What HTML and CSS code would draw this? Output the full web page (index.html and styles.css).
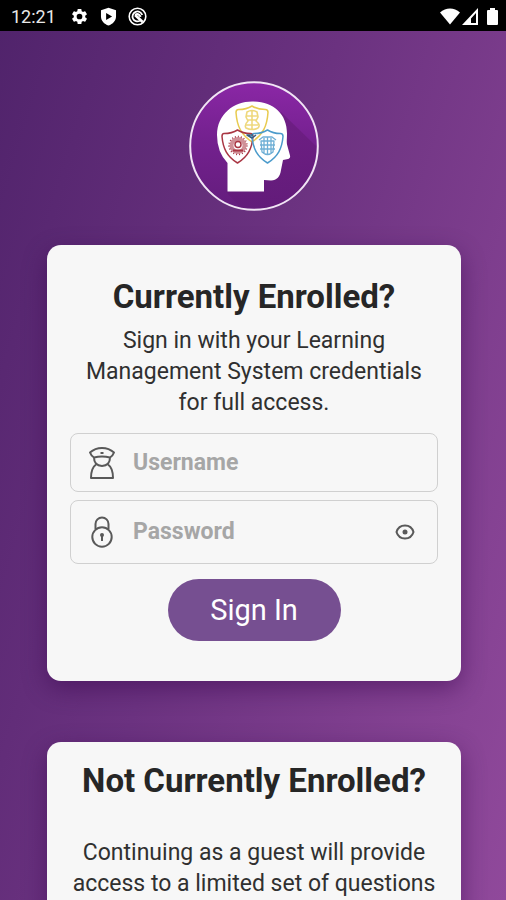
FILE: index.html
```html
<!DOCTYPE html>
<html lang="en">
<head>
<meta charset="utf-8">
<meta name="viewport" content="width=device-width, initial-scale=1">
<title>Sign In</title>
<link rel="stylesheet" href="styles.css">
</head>
<body>
<div class="app">
  <header class="status">
    <div class="status-left">
      <span class="clock">12:21</span>
      <svg class="status-icon" viewBox="0 0 24 24" fill="#fff"><path d="M19.14 12.94c.04-.3.06-.61.06-.94s-.02-.64-.07-.94l2.03-1.58a.5.5 0 0 0 .12-.61l-1.92-3.32a.5.5 0 0 0-.59-.22l-2.39.96a7 7 0 0 0-1.62-.94l-.36-2.54a.5.5 0 0 0-.48-.41h-3.84a.5.5 0 0 0-.47.41l-.36 2.54c-.59.24-1.13.57-1.62.94l-2.39-.96a.5.5 0 0 0-.59.22L2.74 8.87a.5.5 0 0 0 .12.61l2.03 1.58a6 6 0 0 0 0 1.88l-2.03 1.58a.5.5 0 0 0-.12.61l1.92 3.32c.12.22.37.29.59.22l2.39-.96c.5.38 1.03.7 1.62.94l.36 2.54c.05.24.24.41.48.41h3.84c.24 0 .44-.17.47-.41l.36-2.54a7 7 0 0 0 1.62-.94l2.39.96c.22.08.47 0 .59-.22l1.92-3.32a.5.5 0 0 0-.12-.61zM12 15.6a3.6 3.6 0 1 1 0-7.2 3.6 3.6 0 0 1 0 7.200z"/></svg>
      <svg class="status-icon" viewBox="0 0 24 24" fill="#fff" fill-rule="evenodd"><path d="M12 1 21.500 4v8c0 5.500-4 9.500-9.500 11.500C6.500 21.500 2.500 17.500 2.500 12V4zM9 7.500v9l7.500-4.500z"/></svg>
      <svg class="status-icon" viewBox="0 0 24 24" fill="none" stroke="#fff"><circle cx="12" cy="12" r="10.500" stroke-width="2"/><path d="M15 17.500a6.300 6.300 0 1 1 3-7.500" stroke-width="2.200"/><path d="m9 10 9.500 9" stroke-width="3.500"/><path d="M9 10q4-3 7 2.500" stroke-width="2.500"/></svg>
    </div>
    <div class="status-right">
      <svg class="wifi" viewBox="0 0 20 17" fill="#fff"><path d="M0 4.500C6-.8 14-.8 20 4.500L10 16.500z"/></svg>
      <svg class="signal" viewBox="0 0 16 17" fill="#fff" fill-rule="evenodd"><path d="M16 0v17H0zM14 5v10H9v-4.500z"/></svg>
      <svg class="battery" viewBox="0 0 11 17" fill="#fff"><path d="M3 0h5v2h2q1 0 1 1v13q0 1-1 1H1q-1 0-1-1V3q0-1 1-1h2z"/></svg>
    </div>
  </header>
  <main class="page">
    <svg class="logo" viewBox="0 0 130 130" role="img" aria-label="Logo">
      <defs>
        <linearGradient id="disc" x1=".5" y1="0" x2=".45" y2="1"><stop offset="0" stop-color="#8b27a6"/><stop offset=".45" stop-color="#74218f"/><stop offset="1" stop-color="#641d7d"/></linearGradient>
        <linearGradient id="shade" x1=".5" y1="0" x2=".5" y2="1"><stop offset="0" stop-color="#6b1d80"/><stop offset="1" stop-color="#611b78"/></linearGradient>
        <clipPath id="round"><circle cx="65" cy="65" r="63"/></clipPath>
      </defs>
      <circle cx="65" cy="65" r="64" fill="url(#disc)"/>
      <g clip-path="url(#round)"><path d="M92 31 130 68v70H62L37 111z" fill="url(#shade)" opacity=".8"/></g>
      <circle cx="65" cy="65" r="63.800" fill="none" stroke="#f1e5f5" stroke-width="2"/>
      <path d="M38.500 110.500V82Q28 71 28 54C28 33 45 20.500 63 20.500c21 0 35 12 35 32 0 5-.5 8 0 11l3 11c.5 2-.5 3-2 3.500l-5 1-2 10c-1 7-4 10-10 10.500l-7-.5v11.500z" fill="#fff"/>
      <g fill="none" stroke-width="1.500" stroke-linejoin="round">
        <g stroke="#e8cb50">
          <path d="M49.500 28.500q8 0 13.500-3.500 5.500 3.500 13.500 3.500 2.500 0 2.500 3c-1 14-5 22-16 29.500-11-7.500-15-15.500-16-29.500q0-3 2.500-3z"/>
          <g stroke-width="1.600" opacity=".75"><path d="M58 31q5-3 10 0l1 5-2 4q5 4 2 7-6 3-12 0-2-3 2-7l-2-4zM57 35h11M58 39h9M57 44h12M63 30v18"/></g>
        </g>
        <g stroke="#a93643">
          <path d="M35 52.500q8 0 13.500-3.500 5.500 3.500 13 3.500 2.500 0 2.500 3c-1 12-5 20-15.500 26.500C38 75.500 34 67.500 33 55.500q0-3 2-3z"/>
          <circle cx="49" cy="64.500" r="6.500" stroke-width="4" opacity=".55"/>
          <circle cx="49" cy="64.500" r="9" stroke-dasharray="1 2"/>
          <circle cx="49" cy="63.500" r="3"/><path d="M44 69.500h10" stroke-width="2"/>
        </g>
        <g stroke="#4b9bcb">
          <path d="M65 52.500q8 0 13.500-3.500 5.500 3.500 13 3.500 2.500 0 2.500 3c-1 12-5 20-15.500 26.500C68 75.500 64 67.500 63 55.500q0-3 2-3z"/>
          <g stroke-width="1.300" opacity=".8"><path d="M72 60h13l-1 11q-5.500 5-11 0zM70 59l4-3h9l4 3M75 57v16M78.500 56v18M82 57v16M71 64h15M71 68h15"/></g>
        </g>
        <path d="M64 54h-6l5 3 4-3" stroke="#365d80"/>
      </g>
    </svg>

    <section class="card card-login">
      <h1 class="title">Currently Enrolled?</h1>
      <p class="copy">Sign in with your Learning Management System credentials for full access.</p>
      <form class="form">
        <label class="field" for="username">
          <svg class="field-icon" viewBox="0 0 28 34" fill="none" stroke="#595959" stroke-width="2" stroke-linejoin="round"><path d="M2 6.500Q7 2 14 2t12 4.500q-1 3-4 5-8-2-16 0-3-2-4-5zM6 11.500q0 8 8 8.500 8-.5 8-8.500M8 18.500Q3 22 3 32h22q0-10-5-13.500M12.500 7h3"/></svg>
          <input class="input" id="username" type="text" placeholder="Username" aria-label="Username">
        </label>
        <div class="field field-password">
          <label class="icon-label" for="password"><svg class="field-icon" viewBox="0 0 28 34" fill="none" stroke="#595959" stroke-width="2"><path d="M7.500 14V9a6.500 6.500 0 0 1 13 0v5"/><circle cx="14" cy="22" r="9.700"/><path d="M14 20v6" stroke-width="2"/><circle cx="14" cy="20" r="2" fill="#595959" stroke="none"/></svg></label>
          <input class="input" id="password" type="password" placeholder="Password" aria-label="Password">
          <button class="reveal" type="button" aria-label="Show password"><svg class="eye" viewBox="0 0 20 16" fill="none" stroke="#595959" stroke-width="2"><path d="M1.500 8C3 3 6.500 1.500 10 1.500S17 3 18.500 8C17 13 13.500 14.500 10 14.500S3 13 1.500 8z"/><circle cx="10" cy="8" r="2.500" fill="#595959" stroke="none"/></svg></button>
        </div>
        <button class="submit" type="submit">Sign In</button>
      </form>
    </section>

    <section class="card card-guest">
      <h2 class="title">Not Currently Enrolled?</h2>
      <p class="copy">Continuing as a guest will provide access to a limited set of questions</p>
    </section>
  </main>
</div>
</body>
</html>
```
FILE: styles.css
```css
* { box-sizing: border-box; }

body {
  margin: 0;
  font-family: Roboto, "Liberation Sans", sans-serif;
  color: #262626;
}

.app {
  display: flex;
  flex-direction: column;
  height: 100vh;
  background: linear-gradient(107deg, #50236b 0%, #6b3280 45%, #90499b 100%);
}

.status {
  display: flex;
  flex: none;
  align-items: center;
  justify-content: space-between;
  height: 31px;
  padding: 2px 8px 0 11px;
  background: #000;
  color: #e8e8e8;
}

.status-left, .status-right { display: flex; align-items: center; }
.status-left { gap: 10px; }
.status-right { gap: 2px; }
.clock { margin-right: 4px; font-size: 18px; line-height: 24px; }
.status-icon { width: 19px; height: 19px; }
.wifi { width: 20px; height: 17px; }
.signal { width: 16px; height: 17px; margin-right: 7px; }
.battery { width: 11px; height: 17px; }

.page {
  display: flex;
  flex: 1;
  flex-direction: column;
  min-height: 0;
  overflow-y: auto;
  scrollbar-width: none;
  padding: 50px 45px 0 47px;
}

.logo {
  flex: none;
  align-self: center;
  width: 130px;
  height: 130px;
  margin-bottom: 34px;
}

.card {
  flex: none;
  border-radius: 14px;
  background: #f7f7f7;
  box-shadow: 0 8px 24px rgba(50, 0, 70, .45);
  text-align: center;
}

.card-login { margin-bottom: 61px; padding: 33px 23px 40px; }
.card-guest { padding: 20px 22px 40px; }

.title { margin: 0; font-size: 33px; font-weight: 700; line-height: 38px; }
.copy { margin: 9px 0 15px; font-size: 23px; line-height: 31px; color: #303030; }
.card-guest .copy { margin: 37px 0 0; }

.form { display: flex; flex-direction: column; gap: 8px; }

.field {
  display: flex;
  align-items: center;
  gap: 17px;
  height: 59px;
  padding: 0 22px 0 17px;
  border: 1px solid #d0d0d0;
  border-radius: 8px;
}
.field-password { height: 64px; }
.icon-label { display: flex; }
.field-icon { flex: none; width: 28px; height: 34px; }

.input {
  flex: 1;
  min-width: 0;
  padding: 0;
  border: 0;
  outline: 0;
  background: transparent;
  color: #262626;
  font: 700 23px/30px Roboto, "Liberation Sans", sans-serif;
}
.input::placeholder { color: #a6a6a6; opacity: 1; }

.reveal { display: flex; padding: 0; border: 0; background: none; }
.eye { width: 20px; height: 16px; }

.submit {
  align-self: center;
  width: 173px;
  height: 62px;
  margin-top: 7px;
  border: 0;
  border-radius: 31px;
  background: #764f91;
  color: #fff;
  font: 400 29px/36px Roboto, "Liberation Sans", sans-serif;
}
```
